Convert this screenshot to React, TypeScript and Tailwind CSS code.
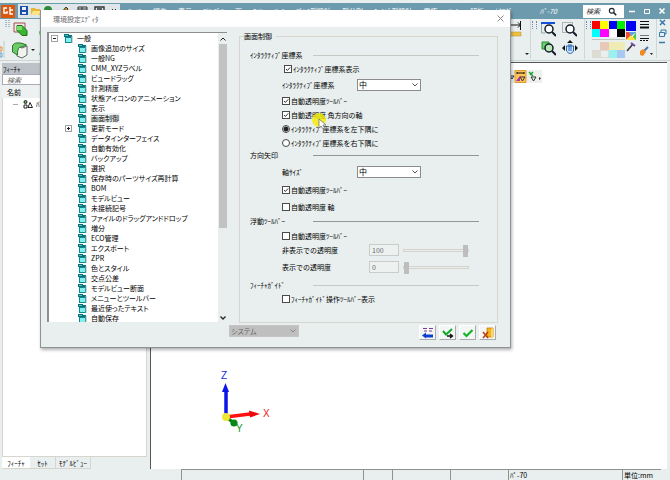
import React from "react";

type Item = { label: string; root?: boolean; box?: "+" | "-"; active?: boolean };

const tree: Item[] = [
  { label: "一般", root: true, box: "-" },
  { label: "画像追加のサイズ" },
  { label: "一般NG" },
  { label: "CMM_XYZラベル" },
  { label: "ビュードラッグ" },
  { label: "計測精度" },
  { label: "状態アイコンのアニメーション" },
  { label: "表示" },
  { label: "画面制御", active: true },
  { label: "更新モード", box: "+" },
  { label: "データインターフェイス" },
  { label: "自動有効化" },
  { label: "バックアップ" },
  { label: "選択" },
  { label: "保存時のパーツサイズ再計算" },
  { label: "BOM" },
  { label: "モデルビュー" },
  { label: "未接続記号" },
  { label: "ファイルのドラッグアンドドロップ" },
  { label: "増分" },
  { label: "ECO管理" },
  { label: "エクスポート" },
  { label: "ZPR" },
  { label: "色とスタイル" },
  { label: "交点公差" },
  { label: "モデルビュー断面" },
  { label: "メニューとツールバー" },
  { label: "最近使ったテキスト" },
  { label: "自動保存" },
];

const menus = ["ﾌｧｲﾙ", "編集", "表示", "ｱｾﾝﾌﾞﾘ", "面", "ﾜｲﾔ", "ﾂｰﾙ", "ﾌﾟﾚｽ型設計", "型分割", "ﾓｰﾙﾄﾞ型設計", "電極", "ﾂｰﾙ", "解析", "ｶﾀﾛｸﾞ"];

function FolderIcon() {
  return (
    <svg className="h-[9px] w-[9px] shrink-0" viewBox="0 0 9 9">
      <path d="M0 0h5v1h3v2H0z" fill="#0b7078" />
      <path d="M1 3h7v6H1z" fill="#0b8890" />
      <path d="M2 4h5v4H2z" fill="#7ff0ee" />
      <path d="M1 1h3v1H1z" fill="#49c5c8" />
      <path d="M8 2v7" stroke="#9aa" strokeWidth="1" />
    </svg>
  );
}

function ExpandBox({ kind }: { kind?: "+" | "-" }) {
  if (!kind) return <span className="w-[7px] shrink-0" />;
  return (
    <button aria-label={kind === "+" ? "展開" : "折りたたむ"} className="h-[7px] w-[7px] shrink-0 border border-[#a0a0a0] bg-white">
      <svg viewBox="0 0 5 5" className="h-[5px] w-[5px]">
        <path d={kind === "+" ? "M1 2.5h3M2.5 1v3" : "M1 2.5h3"} stroke="#222" />
      </svg>
    </button>
  );
}

function Magnifier() {
  return (
    <svg viewBox="0 0 12 12" className="h-[9px] w-[9px]" fill="none" stroke="#17222c">
      <circle cx="5" cy="5" r="3.2" strokeWidth="1.5" />
      <path d="M7.5 7.5l3.5 3.5" strokeWidth="2" />
    </svg>
  );
}

function Grip() {
  return <span className="h-2 w-[5px] shrink-0 border-x border-dotted border-[#6f87a8]" />;
}

function CheckRow({ id, label, checked, className }: { id: string; label: string; checked?: boolean; className: string }) {
  return (
    <div className={`flex h-3 items-center gap-px ${className}`}>
      <span className="relative flex h-2 w-2 shrink-0">
        <input id={id} type="checkbox" defaultChecked={checked} className="peer h-2 w-2 appearance-none border border-[#4a4a4a] bg-white" />
        <svg viewBox="0 0 8 8" className="pointer-events-none absolute inset-0 hidden h-2 w-2 peer-checked:block">
          <path d="M2 4l1.4 1.5L6.2 2.4" fill="none" stroke="#333" />
        </svg>
      </span>
      <label htmlFor={id}>{label}</label>
    </div>
  );
}

function RadioRow({ id, label, checked }: { id: string; label: string; checked?: boolean }) {
  return (
    <div className="mt-0.5 ml-[42px] flex h-3 items-center gap-px">
      <input
        id={id}
        type="radio"
        name="corner"
        defaultChecked={checked}
        className="h-2 w-2 shrink-0 appearance-none rounded-full border border-[#444] bg-white checked:bg-[radial-gradient(circle,#222_0_2px,#fff_3px)]"
      />
      <label htmlFor={id}>{label}</label>
    </div>
  );
}

function SelectRow({ id, label, className }: { id: string; label: string; className: string }) {
  return (
    <div className={`ml-[42px] flex h-3 items-center ${className}`}>
      <label htmlFor={id} className="w-[75px]">{label}</label>
      <span className="relative flex w-16">
        <select id={id} className="h-3 w-full appearance-none border border-[#8c8c8c] bg-white px-px text-[8px] leading-[10px] text-black">
          <option>中</option>
          <option>小</option>
          <option>大</option>
        </select>
        <svg viewBox="0 0 6 4" className="pointer-events-none absolute top-1 right-[3px] h-1 w-1.5">
          <path d="M.5.5L3 3 5.5.5" fill="none" stroke="#555" />
        </svg>
      </span>
    </div>
  );
}

function SliderRow({ id, label, value, className }: { id: string; label: string; value: number; className: string }) {
  return (
    <div className={`ml-[42px] flex h-3 items-center ${className}`}>
      <label htmlFor={id} className="w-[87px]">{label}</label>
      <input id={id} defaultValue={value} disabled className="h-3 w-[30px] border border-[#c9ccc8] bg-[#edf2f0] px-0.5 text-[#666]" />
      <input
        type="range"
        aria-label={label}
        defaultValue={value}
        disabled
        className="ml-1 h-3 w-[66px] appearance-none bg-transparent [&::-webkit-slider-runnable-track]:h-[3px] [&::-webkit-slider-runnable-track]:border [&::-webkit-slider-runnable-track]:border-[#d3d3cc] [&::-webkit-slider-thumb]:mt-[-5px] [&::-webkit-slider-thumb]:h-3 [&::-webkit-slider-thumb]:w-[5px] [&::-webkit-slider-thumb]:appearance-none [&::-webkit-slider-thumb]:bg-[#bdbdbd]"
      />
    </div>
  );
}

function Section({ label, dark, className }: { label: string; dark?: boolean; className: string }) {
  return (
    <div className={`ml-2.5 flex h-3 items-center ${className}`}>
      <h3 className="w-[63px] shrink-0">{label}</h3>
      <span className={`mr-[18px] h-px flex-1 ${dark ? "bg-[#92969a]" : "bg-[#c6c8c3]"}`} />
    </div>
  );
}

function DialogButton({ label, children }: { label: string; children: React.ReactNode }) {
  return (
    <button aria-label={label} className="flex h-[15px] w-[17px] items-center justify-center border border-[#fff] border-r-[#aaa] border-b-[#aaa] bg-[#f4f6f5]">
      <svg viewBox="0 0 12 12" className="h-3 w-3" fill="none">{children}</svg>
    </button>
  );
}

function SettingsDialog() {
  return (
    <section role="dialog" aria-label="環境設定ｴﾃﾞｨﾀ" className="absolute top-[10px] left-[40px] flex h-[338px] w-[471px] flex-col border-x border-b border-[#8e9292] bg-[#e8efee] shadow-[1px_2px_3px_rgba(0,0,0,0.3)]">
      <header className="flex h-[17px] items-center justify-between bg-white pr-[6px] pl-3 text-[#666]">
        <h1>環境設定ｴﾃﾞｨﾀ</h1>
        <button aria-label="閉じる">
          <svg viewBox="0 0 7 7" className="h-[7px] w-[7px]"><path d="M.5.5l6 6M6.5.5l-6 6" stroke="#888" /></svg>
        </button>
      </header>
      <div className="flex min-h-0 flex-1 gap-3 pr-3 pl-[6px]">
        <div className="mt-[5px] flex h-[290px] w-[180px] shrink-0 border-t border-l-2 border-[#8e8e8e] bg-white">
          <ul className="flex-1 overflow-hidden [font-feature-settings:'palt']">
            {tree.map((t) => (
              <li key={t.label} className={`flex h-[10px] items-center leading-[10px] ${t.root ? "pl-[2px]" : "pl-4"}`}>
                <ExpandBox kind={t.box} />
                <span className="ml-1.5"><FolderIcon /></span>
                <span className={`ml-[3px] px-px whitespace-nowrap ${t.active ? "bg-[#eef1f1]" : ""}`}>{t.label}</span>
              </li>
            ))}
          </ul>
          <div className="flex w-[9px] flex-col items-center justify-between bg-[#e8efee]">
            <svg viewBox="0 0 6 4" className="mt-1 h-1 w-1.5"><path d="M.5 3.5L3 1l2.5 2.5" fill="none" stroke="#222" /></svg>
            <span className="mt-[3px] h-[184px] w-[8px] bg-[#c2c2c2]" />
            <span className="flex-1" />
            <svg viewBox="0 0 6 4" className="mb-0.5 h-1 w-1.5"><path d="M.5.5L3 3 5.5.5" fill="none" stroke="#222" strokeWidth="1.3" /></svg>
          </div>
        </div>
        <fieldset className="mt-1 h-[292px] min-w-0 flex-1 border border-[#d6d6cf]">
          <legend className="ml-1 pr-1 leading-[10px]">画面制御</legend>
          <Section label="ｲﾝﾀﾗｸﾃｨﾌﾞ座標系" className="mt-2" />
          <CheckRow id="c1" label="ｲﾝﾀﾗｸﾃｨﾌﾞ座標系表示" checked className="mt-0.5 ml-11" />
          <SelectRow id="s1" label="ｲﾝﾀﾗｸﾃｨﾌﾞ座標系" className="mt-1" />
          <CheckRow id="c2" label="自動透明度ﾂｰﾙﾊﾞｰ" checked className="mt-1 ml-[42px]" />
          <CheckRow id="c3" label="自動透明度 角方向の軸" checked className="mt-0.5 ml-[42px]" />
          <RadioRow id="r1" label="ｲﾝﾀﾗｸﾃｨﾌﾞ座標系を左下隅に" checked />
          <RadioRow id="r2" label="ｲﾝﾀﾗｸﾃｨﾌﾞ座標系を右下隅に" />
          <Section label="方向矢印" dark className="" />
          <SelectRow id="s2" label="軸ｻｲｽﾞ" className="mt-[5px]" />
          <CheckRow id="c4" label="自動透明度ﾂｰﾙﾊﾞｰ" checked className="mt-1.5 ml-[42px]" />
          <CheckRow id="c5" label="自動透明度 軸" className="mt-[5px] ml-[42px]" />
          <Section label="浮動ﾂｰﾙﾊﾞｰ" dark className="mt-0.5" />
          <CheckRow id="c6" label="自動透明度ﾂｰﾙﾊﾞｰ" className="mt-[3px] ml-[42px]" />
          <SliderRow id="v1" label="非表示での透明度" value={100} className="mt-0.5" />
          <SliderRow id="v2" label="表示での透明度" value={0} className="mt-[5px]" />
          <Section label="ﾌｨｰﾁｬｶﾞｲﾄﾞ" className="mt-1.5" />
          <CheckRow id="c7" label="ﾌｨｰﾁｬｶﾞｲﾄﾞ操作ﾂｰﾙﾊﾞｰ表示" className="mt-0.5 ml-[42px]" />
        </fieldset>
      </div>
      <footer className="flex h-[24px] items-start justify-between pr-[14px] pl-[188px]">
        <span className="relative mt-0.5 flex">
          <select aria-label="レベル" disabled className="h-3 w-[70px] appearance-none border border-[#c4c4c4] bg-[#bfbfbf] px-px leading-[10px] text-[#666] [font-feature-settings:'palt']">
            <option>システム</option>
          </select>
          <svg viewBox="0 0 6 4" className="pointer-events-none absolute top-1 right-[3px] h-1 w-1.5"><path d="M.5.5L3 3 5.5.5" fill="none" stroke="#888" /></svg>
        </span>
        <div className="mt-0.5 flex gap-[3px]">
          <DialogButton label="既定値">
            <path d="M1 1.5h4M7 1.5h4M2 4h3M7 4h3" stroke="#7a3c8c" />
            <path d="M0 8.500l4-3v2h7v3H4v1z" fill="#0b3fd0" />
          </DialogButton>
          <DialogButton label="適用">
            <path d="M1 4l3 3.5L10 2" stroke="#12a82a" strokeWidth="2" />
            <path d="M5 9h5M8 7l2.5 2L8 11" stroke="#111" strokeWidth="1.4" />
          </DialogButton>
          <DialogButton label="OK"><path d="M1.5 6l3 3L10.500 3" stroke="#12b52a" strokeWidth="2.200" /></DialogButton>
          <DialogButton label="キャンセル">
            <path d="M5 1h6v9H5z" fill="#f6b21c" stroke="#b87400" strokeWidth=".7" />
            <path d="M9 2l2-1v10l-2-1z" fill="#ffd75a" />
            <path d="M1 5l5 6M6 5l-5 6" stroke="#b83a16" strokeWidth="1.5" />
          </DialogButton>
        </div>
      </footer>
      <svg viewBox="0 0 18 18" className="pointer-events-none absolute top-[102px] left-[269px] h-[18px] w-[18px]">
        <circle cx="9" cy="8" r="7" fill="#f4ec00" fillOpacity=".8" />
        <path d="M9 7v9l2-2 2 3 1.500-1-1.500-3h3z" fill="#fff" stroke="#666" strokeWidth=".7" />
      </svg>
    </section>
  );
}

function Cell({ className }: { className: string }) {
  return <button aria-label="色" className={`h-2 ${className}`} />;
}

function TitleBar() {
  return (
    <header className="flex h-4 shrink-0 items-center overflow-hidden bg-[#6d9bae] text-white">
      <svg viewBox="0 0 14 13" className="ml-px h-[13px] w-[14px] shrink-0">
        <path d="M0 0h14v13H0z" fill="#d9580e" />
        <path d="M6 3H3v5h3V6M9 2v7h3M9 5h3" fill="none" stroke="#fff" strokeWidth="1.4" />
      </svg>
      <svg viewBox="0 0 102 14" className="ml-[3px] h-[14px] w-[102px] shrink-0" fill="none">
        <path d="M0 0h102v14H0z" fill="#dfe6ea" />
        <path d="M2 2h8v9H2z" fill="#1b4fa8" /><path d="M4 3h4v3H4zM4 8h4v2H4z" fill="#e8f0ff" />
        <path d="M13 4h4l1 1h4v6h-9z" fill="#e6b83a" /><path d="M15 7h8l-2 4h-8z" fill="#ffe58a" />
        <circle cx="30" cy="6" r="4" fill="#2b8a36" />
        <path d="M44 8l4-5 2 2-3 4z" fill="#c8921e" stroke="#333" />
        <path d="M60 3h9v8h-9zM60 5h9M64 3v8" stroke="#333" />
        <path d="M77 3h9v8h-9zM79 5h5" stroke="#333" strokeWidth="1.400" />
        <path d="M94 5l2 2 2-2" stroke="#333" />
      </svg>
      <nav className="ml-2 flex flex-1 items-center gap-[11px] overflow-hidden whitespace-nowrap">
        {menus.map((m, i) => <button key={i}>{m}</button>)}
      </nav>
      <span className="mr-[26px] shrink-0 italic">ﾊﾟ-70</span>
      <label className="flex h-[13px] w-[41px] shrink-0 items-center bg-white text-[#111]">
        <input aria-label="検索" placeholder="検索" className="w-[25px] px-[3px] italic placeholder:text-[#222]" />
        <Magnifier />
      </label>
      <div className="flex shrink-0">
        <button aria-label="最小化" className="flex w-[15px] justify-center"><svg viewBox="0 0 8 8" className="h-2 w-2"><path d="M1 4.500h6" stroke="#fff" strokeWidth="1.500" /></svg></button>
        <button aria-label="最大化" className="flex w-[15px] justify-center"><svg viewBox="0 0 8 8" className="h-2 w-2"><path d="M1.500 2.500h5v4h-5z" fill="none" stroke="#fff" /></svg></button>
        <button aria-label="終了" className="flex w-[16px] justify-center"><svg viewBox="0 0 8 8" className="h-2 w-2"><path d="M1.500 1.500l5 5M6.500 1.500l-5 5" stroke="#fff" strokeWidth="1.600" /></svg></button>
      </div>
    </header>
  );
}

function Toolbar() {
  return (
    <div className="flex h-[42px] shrink-0 items-start overflow-hidden border-b border-[#cfd4d4] bg-[#e8efee]">
      <svg viewBox="0 0 46 40" className="h-10 w-[46px] shrink-0" fill="none">
        <path d="M6 1v7M9 1v7" stroke="#6f87a8" strokeDasharray="1 1" />
        <path d="M0 28h2v4H0z" stroke="#e59548" /><path d="M0 34h2v4H0z" stroke="#6aa7cc" />
        <path d="M4 22v17" stroke="#c4cccc" />
        <path d="M14 4h11v9H14z" fill="#f6e3e3" stroke="#a05050" />
        <path d="M17 6.500h5l5 5v5h-5l-5-5z" fill="#39b52f" stroke="#1d6f1a" />
        <path d="M17 7h5v4h-5z" fill="#79e06b" />
        <path d="M17 27l5 2 5-2v9l-5 3-5-2z" fill="#f1f3ef" stroke="#666" />
        <path d="M12.500 27c1-4 8-4 14-1l-5 2c-3 0-4 2-4 8l-5-3z" fill="#6dc96a" stroke="#2a772a" />
        <path d="M31 30h4l-2 2z" fill="#222" />
        <path d="M39 13q2-4 6-2v6h-5zM39 36q2-8 6-6v6z" fill="#48b84a" />
      </svg>
      <div className="flex-1" />
      <svg viewBox="0 0 22 40" className="h-10 w-[22px] shrink-0" fill="none">
        <path d="M0 6h13M12.500 2v9M10 3.500l2.500 2.500-2.500 2.500" stroke="#111" />
        <path d="M0 13h13v4H0z" fill="#ecc244" stroke="#b98c20" strokeWidth=".5" />
        <path d="M17 34h4l-2 2z" fill="#222" />
      </svg>
      <div className="flex h-[40px] w-[54px] shrink-0 items-start border-l border-[#cfd6d6] pt-0.5 pl-px">
        <Grip />
        <div className="ml-0.5 grid grid-cols-2 gap-x-[5px] gap-y-[3px] pl-0.5">
          <button aria-label="全体表示"><svg viewBox="0 0 15 16" className="h-4 w-[15px]" fill="none"><path d="M.5 2v10h4" stroke="#8aa" /><path d="M0 1h14v2H0z" fill="#1452dd" /><circle cx="8" cy="8" r="4" stroke="#111d28" strokeWidth="1.500" fill="#fff" /><path d="M11 11l4 4" stroke="#111d28" strokeWidth="2" /></svg></button>
          <button aria-label="範囲拡大"><svg viewBox="0 0 15 16" className="h-4 w-[15px]" fill="none"><path d="M.5 1.500h10v10H.5z" stroke="#777" strokeDasharray="1 1" /><circle cx="8" cy="8" r="4" stroke="#111d28" strokeWidth="1.500" fill="#fff" /><path d="M11 11l4 4" stroke="#111d28" strokeWidth="2" /></svg></button>
          <button aria-label="選択拡大"><svg viewBox="0 0 15 16" className="h-4 w-[15px]" fill="none"><path d="M1 2h7v7H1z" fill="#6bd06a" stroke="#298a33" /><circle cx="8" cy="8" r="4" stroke="#111d28" strokeWidth="1.500" fill="#b9e9b9" /><path d="M11 11l4 4" stroke="#111d28" strokeWidth="2" /></svg></button>
          <button aria-label="移動"><svg viewBox="0 0 16 16" className="h-4 w-4" fill="none"><path d="M8 0l3 3H5zM0 8l3-3v6zM16 8l-3-3v6z" fill="#111" /><path d="M4.500 6h7v5q-3 5-7 0z" fill="#d6eaff" stroke="#2463b0" /><path d="M7 4v7M9 4v7" stroke="#2463b0" /></svg></button>
        </div>
      </div>
      <div className="flex h-[40px] w-[72px] shrink-0 items-start border-l border-[#cfd6d6] pt-0.5 pl-px">
        <Grip />
        <div className="mr-px ml-px w-[33px]">
          <div className="grid grid-cols-4">
            <Cell className="bg-[#ff0000]" /><Cell className="bg-[#ffff00]" /><Cell className="bg-[#0000ff]" /><Cell className="bg-[#00f000]" />
            <Cell className="bg-[#00ffff]" /><Cell className="bg-[#ff00ff]" /><Cell className="bg-white" /><Cell className="bg-black" />
          </div>
          <div className="my-[2px] h-px bg-[#bcc4c4]" />
          <div className="grid grid-cols-4">
            <Cell className="" /><Cell className="bg-[#e8c8b8]" /><Cell className="bg-[#efebb5]" /><Cell className="bg-[#efebb5]" />
            <Cell className="bg-[#dcdcd2]" /><Cell className="border border-[#dcdcd2]" /><Cell className="bg-[#98f0ef]" /><Cell className="bg-[#a6c8f3]" />
          </div>
        </div>
        <svg viewBox="0 0 28 40" className="h-10 w-7 shrink-0" fill="none">
          <path d="M0 0h10v10H0z" fill="#0000f5" />
          <path d="M0 11h10L0 19z" fill="#ef4d35" /><path d="M10 11v8H5z" fill="#45c958" /><path d="M0 19l5-5 5 5z" fill="#ffe23d" /><path d="M3 11h7l-5 4z" fill="#58a5ee" />
          <path d="M1 30l6-7" stroke="#333" strokeWidth="1.500" /><path d="M5 22l4 3" stroke="#73439c" strokeWidth="2" />
          <path d="M14 .5h9M14 3.500h9" stroke="#111" /><path d="M14 6.500h9" stroke="#111" strokeWidth="2" />
          <path d="M14 14.500h9" stroke="#777" /><path d="M14 17.500h9" stroke="#111" /><path d="M14 19.500h9" stroke="#111" strokeDasharray="2 1" />
          <path d="M22 26l-4 4" stroke="#4d6fb4" strokeWidth="2" /><path d="M14 30l3-2 3 3-3 4-3-1z" fill="#ef8b23" />
          <path d="M24 32h3l-1.500 2z" fill="#222" />
        </svg>
      </div>
      <svg viewBox="0 0 14 40" className="h-10 w-[14px] shrink-0" fill="none" stroke="#3978ad">
        <path d="M.5 0v39" stroke="#cfd6d6" />
        <path d="M4 1l5 5M9 1l-5 5" strokeWidth="1.500" />
        <path d="M3.500 13.500h5v4h-5zM5 13v-2h5v4H9" />
        <path d="M3 23.500h6" strokeWidth="1.500" />
      </svg>
    </div>
  );
}

export default function App() {
  return (
    <div className="relative flex h-screen min-h-[480px] flex-col overflow-hidden bg-[#e8efee] pt-[3px] font-['Noto_Sans_CJK_JP',sans-serif] text-[7px] leading-[10px] text-black">
      <TitleBar />
      <Toolbar />
      <main className="flex min-h-0 flex-1 gap-[3px] pr-[3px] pl-[2px]">
        <aside className="flex w-[145px] shrink-0 flex-col">
          <h2 className="mt-0.5 flex h-[11px] shrink-0 items-center bg-[#bcc2c8] pl-px">ﾌｨｰﾁｬ</h2>
          <input aria-label="フィーチャ検索" placeholder="検索" className="h-[11px] shrink-0 border border-[#aab] bg-white px-1 italic placeholder:text-[#555]" />
          <div className="flex h-[13px] shrink-0 items-center bg-[#edf1f1] pl-[5px]">名前</div>
          <div className="flex-1 border border-t-0 border-[#d6d6cf] bg-white">
            <div className="flex h-3 items-center pl-[10px]">
              <span className="w-[5px] border-t border-[#aaa]" />
              <svg viewBox="0 0 10 9" className="ml-[5px] h-[9px] w-[10px]" fill="none" stroke="#222"><circle cx="2.500" cy="2" r="1.500" fill="#58b84c" /><path d="M1 5h3v3H1zM5 7.500l2-5 2.500 5z" /></svg>
              <span className="ml-[3px]">ﾊﾟ-70</span>
            </div>
          </div>
          <nav className="flex h-3 shrink-0">
            <button className="w-7 border-b border-[#d6d6cf] bg-white">ﾌｨｰﾁｬ</button>
            <button className="w-[26px] border-r border-b border-[#d6d6cf]">ｾｯﾄ</button>
            <button className="w-[35px] border-r border-b border-[#d6d6cf]">ﾓﾃﾞﾙﾋﾞｭｰ</button>
          </nav>
        </aside>
        <section aria-label="ビュー" className="relative mt-px flex-1 border-t border-l border-[#555] bg-white">
          <div className="absolute top-[7px] left-[357px] flex h-[13px] w-[34px] bg-[#edf0ed]">
            <svg viewBox="0 0 34 13" className="h-[13px] w-[34px]" fill="none">
              <path d="M2 6h4l-2 3z" stroke="#333" />
              <path d="M7 .5h11v12H7z" fill="#ffc35a" stroke="#dd9a38" />
              <path d="M9 3h7M9 2v2M16 2v2" stroke="#111" /><path d="M8 11l4-5v5z" fill="#b030b0" /><path d="M12 7h5l-2.500 4z" stroke="#333" />
              <path d="M21 2l4 4M25 2l-3 3" stroke="#18a52b" strokeWidth="1.500" /><path d="M23 7h5l-2.500 4z" stroke="#333" /><path d="M31 7v3l2-1.500z" fill="#222" />
            </svg>
          </div>
          <svg viewBox="0 0 60 70" className="absolute top-[306px] left-[64px] h-[70px] w-[60px]" fontFamily="Liberation Sans" fontSize="10">
            <text x="6" y="10" fill="#1530e0">Z</text>
            <text x="48" y="48" fill="#f02020">X</text>
            <text x="21" y="63" fill="#0a9a20">Y</text>
            <path d="M11 48l8 6" stroke="#087d12" strokeWidth="3" /><circle cx="19" cy="54" r="3.600" fill="#078714" />
            <path d="M11 48l24-3" stroke="#ff1010" strokeWidth="3.500" /><path d="M34 41.500l11 3.500-10 3.500z" fill="#f00808" />
            <path d="M11 48V22" stroke="#0a16e8" strokeWidth="3.500" /><path d="M7 23l3.500-9 3.500 9z" fill="#0a16e8" />
            <circle cx="11" cy="48" r="4" fill="#f0e634" />
          </svg>
        </section>
      </main>
      <footer className="flex h-[11px] shrink-0 pr-[9px] pl-[181px] leading-[10px]">
        <span className="flex-1 border-t border-l border-[#8d9292]" />
        <span className="w-[29px] border-t border-l border-[#8d9292]" />
        <span className="w-[58px] border-t border-l border-[#8d9292]" />
        <span className="w-[58px] border-t border-l border-[#8d9292]" />
        <span className="w-[114px] border-t border-l border-[#8d9292] pl-px">ﾊﾟ-70</span>
        <span className="w-[39px] border-t border-l border-[#8d9292] pl-px">単位:mm</span>
      </footer>
      <SettingsDialog />
    </div>
  );
}
